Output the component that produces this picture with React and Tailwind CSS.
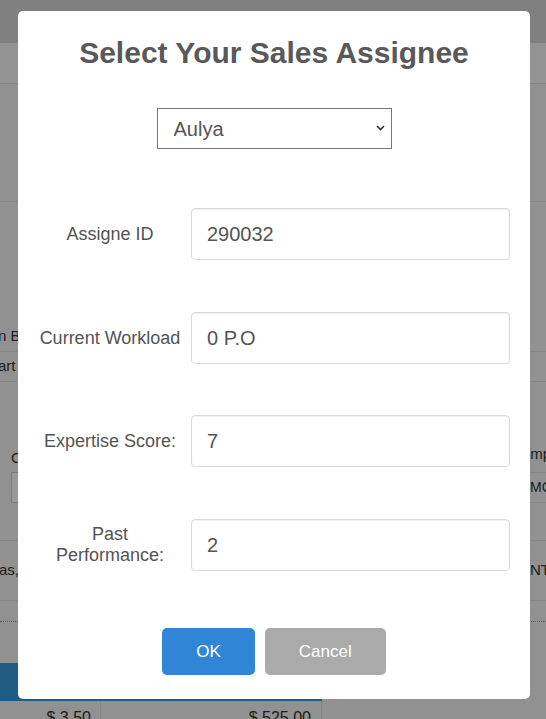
import React from "react";

function Chevron() {
  return (
    <svg width="9" height="6" viewBox="0 0 9 6" className="pointer-events-none absolute right-[7px] top-[17px]">
      <path d="M1 1 L4.5 4.5 L8 1" fill="none" stroke="#333" strokeWidth="1.6" />
    </svg>
  );
}

function Row({ label, value, className = "" }) {
  return (
    <div className={`grid grid-cols-[144px_1fr] gap-[9px] items-center ${className}`}>
      <div className="text-center text-[18px] leading-[21px] text-[#545454]">{label}</div>
      <input
        readOnly
        value={value}
        className="h-[52px] w-full rounded-[4px] border border-[#d9d9d9] bg-white pl-[15px] text-[20px] text-[#545454] shadow-[inset_0_1px_1px_rgba(0,0,0,0.06)] outline-none"
        style={{ fontFamily: '"Liberation Sans", Arial, sans-serif' }}
      />
    </div>
  );
}

export default function App() {
  return (
    <div
      className="relative h-[719px] w-[546px] overflow-hidden bg-[#f2f2f2] text-[#333]"
      style={{ fontFamily: '"Liberation Sans", Arial, sans-serif' }}
    >
      {/* background page */}
      <div className="flex flex-col">
        <div className="h-[43px] bg-[#d5d5d5]" />
        <div className="h-[41px] border-b border-[#dedede] bg-[#f5f5f5]" />
        <div className="h-[118px] border-b border-[#dedede] bg-[#f2f2f2]" />
        <div className="h-[120px]" />
        <div className="flex h-[30px] items-center overflow-hidden whitespace-nowrap border-b border-[#dedede] text-[15px]">
          <span className="ml-[-2px]">n Before</span>
        </div>
        <div className="flex h-[30px] items-center overflow-hidden whitespace-nowrap border-b border-[#dedede] text-[15px]">
          <span className="ml-[-2px]">art Date</span>
        </div>
        <div className="flex h-[90px] items-end justify-between overflow-hidden whitespace-nowrap pb-[7px] text-[15px]">
          <span className="ml-[11px] mb-[-4px]">Customer</span>
          <span className="mr-[-5px]">Comp</span>
        </div>
        <div className="flex h-[31px] items-stretch justify-between">
          <div className="ml-[11px] w-[120px] border border-[#cfcfcf] bg-white" />
          <div className="flex w-[16px] items-center overflow-hidden whitespace-nowrap border-y border-[#dedede] text-[14px]">
            MGMT
          </div>
        </div>
        <div className="h-[38px] border-b border-[#dedede]" />
        <div className="flex h-[60px] items-center justify-between overflow-hidden whitespace-nowrap border-b border-[#dedede] text-[15px]">
          <span className="ml-[-1px]">as, Inc</span>
          <span className="mr-[-14px]">NTS</span>
        </div>
        <div className="h-[21px] border-b border-dotted border-[#999]" />
        <div className="h-[41px]" />
        <div className="h-[38px] w-[322px] bg-[#3498db]" />
        <div className="grid h-[30px] w-[322px] grid-cols-[101px_221px] text-[16px]">
          <div className="border-r border-[#dedede] pr-[9px] pt-[5px] text-right">$ 3.50</div>
          <div className="border-r border-[#dedede] pr-[10px] pt-[5px] text-right">$ 525.00</div>
        </div>
      </div>

      {/* overlay */}
      <div className="absolute inset-0 bg-black/40" />

      {/* modal */}
      <div className="absolute left-[18px] top-[11px] flex h-[688px] w-[512px] flex-col rounded-[5px] bg-white px-[20px] pt-[25px]">
        <h2 className="text-center text-[30px] font-bold leading-[34px] text-[#595959]">
          Select Your Sales Assignee
        </h2>
        <div className="relative mx-auto mt-[38px] h-[41px] w-[235px]">
          <select
            className="h-[41px] w-[235px] appearance-none rounded-none border border-[#767676] bg-white pl-[16px] text-[20px] text-[#545454] outline-none"
            style={{ fontFamily: '"Liberation Sans", Arial, sans-serif' }}
            defaultValue="Aulya"
          >
            <option>Aulya</option>
          </select>
          <Chevron />
        </div>

        <Row label="Assigne ID" value="290032" className="mt-[59px]" />
        <Row label="Current Workload" value="0 P.O" className="mt-[52px]" />
        <Row label="Expertise Score:" value="7" className="mt-[51px]" />
        <Row label="Past Performance:" value="2" className="mt-[52px]" />

        <div className="mt-[57px] flex justify-center gap-[10px]">
          <button className="flex h-[47px] items-center rounded-[5px] bg-[#3085d6] px-[34px] text-[17px] text-white">
            OK
          </button>
          <button className="flex h-[47px] items-center rounded-[5px] bg-[#aaaaaa] px-[34px] text-[17px] text-white">
            Cancel
          </button>
        </div>
      </div>
    </div>
  );
}
